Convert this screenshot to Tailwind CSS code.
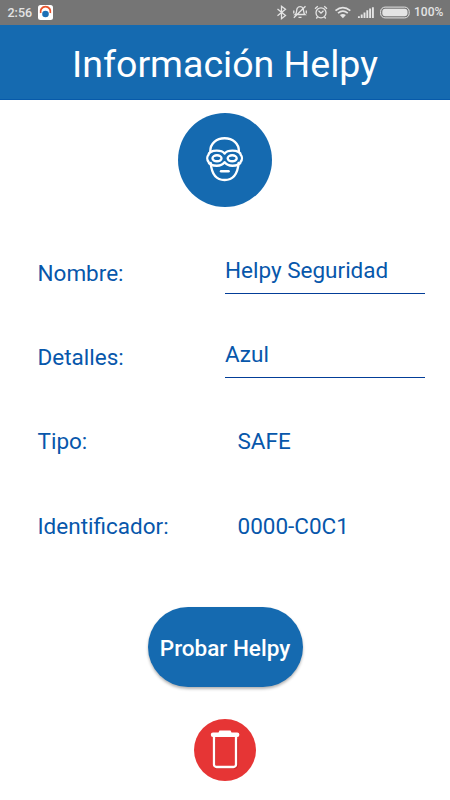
<!DOCTYPE html>
<html lang="es">
<head>
<meta charset="utf-8">
<title>Información Helpy</title>
<script src="https://cdn.jsdelivr.net/npm/@tailwindcss/browser@4"></script>
</head>
<body class="bg-white">
<div class="w-[450px] h-[800px] overflow-hidden flex flex-col bg-white font-['Roboto','Liberation_Sans',sans-serif]">
  <div class="h-[25px] shrink-0 bg-[#757575] flex items-center text-[#e4e4e4] text-[12px] font-bold">
    <span class="ml-[7.5px] w-[25.5px] text-[12.5px] font-medium leading-[25px]">2:56</span>
    <svg class="ml-[5px]" width="15" height="15" viewBox="0 0 15 15"><rect width="15" height="15" rx="2.5" fill="#fff"/><path d="M2.700 8a5 5 0 1 1 9.600 0" fill="none" stroke="#e8532b" stroke-width="1.800"/><circle cx="7.500" cy="9" r="3.300" fill="#1c6fb5"/></svg>
    <svg class="ml-auto" width="109" height="25" viewBox="271 0 109 25" fill="none" stroke="#e4e4e4" stroke-width="1.300">
      <path d="M277.500 9l8 6.500-4 3.200V6.300l4 3-8 6.500"/>
      <path d="M295.300 14.500c1.700-1.200.9-4.500 2-6.300 1.200-2.100 4.500-2.100 5.600 0 1.100 1.800.3 5.100 2 6.300zM298.500 17.300h3M305.500 6.300L293.800 17.800M293.800 10.500v3M306.300 10.500v3"/>
      <circle cx="321" cy="12.800" r="5"/><path d="M318.500 10.700l2.500 2.400 2.500-2.400M315 8.800l2.800-2.500M327 8.800l-2.800-2.500M317.500 17l-1.200 1.500M324.500 17l1.200 1.500"/>
      <path d="M335.500 10.600q7.300-6 14.800 0M338 13.100q4.900-3.900 9.800 0" stroke-width="1.700"/><path d="M339.900 15q3-2.200 6 0l-3 3.300z" fill="#e4e4e4" stroke="none"/>
      <path d="M358.900 18v-1.700M361.700 18v-3.400M364.500 18v-5.400M367.300 18v-7.700M370.100 18V8.500M372.900 18V7.300" stroke-width="1.900"/>
    </svg>
    <svg width="30" height="13" viewBox="0 0 30 13"><rect x=".6" y="1.100" width="28.600" height="10.800" rx="4.500" fill="none" stroke="#e4e4e4"/><rect x="2.300" y="2.800" width="25.200" height="7.400" rx="3" fill="#e4e4e4"/></svg>
    <span class="ml-[4px] w-[36px] text-[12px] font-medium leading-[25px]">100%</span>
  </div>
  <header class="h-[75px] shrink-0 bg-[#156ab0] border-b border-[#075aaa] flex items-center justify-center text-white text-[37.5px] leading-[44px] pt-[3px]">Información Helpy</header>
  <div class="mt-[13px] size-[94px] shrink-0 rounded-full bg-[#156ab0] self-center flex items-center justify-center">
    <svg width="60" height="60" viewBox="195 130 60 60" fill="none" stroke="#fff" stroke-width="2.400" stroke-linecap="round" stroke-linejoin="round">
      <path d="M210.300 151.300c0-7.700 6-13 14.300-13s14.300 5.300 14.300 13M210.700 163c.9 10.500 5.600 17 13.900 17S237.700 173.500 238.600 163"/>
      <path d="M224.600 153.500c-1.500-2-4.300-2.900-7.800-2.900-5 0-8.300 2-8.300 4.200-1.600 1.800-1.600 5 0 7 0 2.300 3.800 4 8.300 4 4 0 6.500-1.600 7.800-3.600 1.300 2 3.800 3.600 7.800 3.600 4.500 0 8.300-1.700 8.300-4 1.600-2 1.600-5.200 0-7 0-2.200-3.300-4.200-8.300-4.200-3.500 0-6.300.9-7.800 2.900z"/>
      <ellipse cx="217" cy="158.300" rx="4.500" ry="3"/><ellipse cx="232.200" cy="158.300" rx="4.500" ry="3"/><path d="M221 171.300h7.600"/>
    </svg>
  </div>
  <main class="mt-[24px] pl-[37.5px] pr-[25px] grid grid-cols-[187.5px_200px] auto-rows-[84.375px] items-center text-[22.5px] leading-[27px] text-[#0757ab]">
    <span>Nombre:</span>
    <div class="h-[42px] pt-[5px] border-b border-[#033e98]">Helpy Seguridad</div>
    <span>Detalles:</span>
    <div class="h-[42px] pt-[4.5px] mb-px border-b border-[#033e98]">Azul</div>
    <span>Tipo:</span><span class="pl-[12.5px]">SAFE</span>
    <span>Identificador:</span><span class="pl-[12.5px]">0000-C0C1</span>
  </main>
  <button class="mt-[38px] w-[155px] h-[80px] shrink-0 rounded-full bg-[#156ab0] self-center text-white text-[22.5px] leading-[27px] font-medium pt-[3px] shadow-[0_2px_3px_rgba(0,0,0,0.3)]">Probar Helpy</button>
  <div class="mt-[32px] size-[62px] shrink-0 rounded-full bg-[#e63535] self-center flex items-center justify-center">
    <svg width="62" height="62" viewBox="194 719 62 62" fill="none">
      <path d="M214.500 739v26a2.500 2.500 0 0 0 2.500 2.500h17.500a2.500 2.500 0 0 0 2.500-2.500v-26" stroke="#a91f1f" stroke-opacity=".55" stroke-width="2.400"/>
      <path d="M214 736v28.500a2.500 2.500 0 0 0 2.500 2.500H233.500a2.500 2.500 0 0 0 2.500-2.500V736" stroke="#fff" stroke-width="2.300"/>
      <path d="M213 732.500h5.500l1-1.900h11l1 1.900h5.700a2.200 2.200 0 0 1 0 4.400h-24.200a2.200 2.200 0 0 1 0-4.400z" fill="#fff"/>
    </svg>
  </div>
</div>
</body>
</html>
